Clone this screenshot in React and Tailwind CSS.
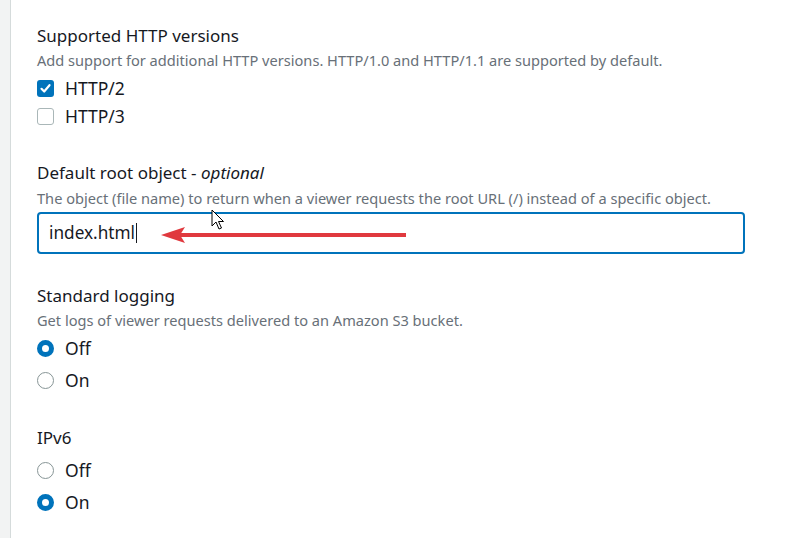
import React from "react";

const font = { fontFamily: '"Noto Sans", "Open Sans", Arial, sans-serif' };

function Checkbox({ checked }) {
  return checked ? (
    <span className="flex h-[17px] w-[17px] shrink-0 items-center justify-center rounded-[3px] bg-[#0073bb]">
      <svg width="13" height="13" viewBox="0 0 13 13">
        <path d="M2.5 6.8 L5.2 9.5 L10.5 3.2" fill="none" stroke="#fff" strokeWidth="2.2" strokeLinecap="round" strokeLinejoin="round" />
      </svg>
    </span>
  ) : (
    <span className="block h-[17px] w-[17px] shrink-0 rounded-[3px] border-[1.5px] border-[#aab7b8] bg-white" />
  );
}

function Radio({ checked }) {
  return checked ? (
    <span className="block h-[17px] w-[17px] shrink-0 rounded-full border-[5px] border-[#0073bb] bg-white" />
  ) : (
    <span className="block h-[17px] w-[17px] shrink-0 rounded-full border-[1.5px] border-[#879596] bg-white" />
  );
}

function Row({ control, label, h }) {
  return (
    <div className={`flex items-center gap-[11px] ${h}`}>
      {control}
      <span className="text-[17.5px] font-normal text-[#16191f]">{label}</span>
    </div>
  );
}

function Heading({ children, className = "" }) {
  return <div className={`h-[24px] text-[17px] leading-[24px] text-[#16191f] ${className}`}>{children}</div>;
}

function Desc({ children, className = "" }) {
  return <div className={`h-[24px] whitespace-nowrap text-[14.6px] leading-[24px] text-[#687078] ${className}`}>{children}</div>;
}

export default function App() {
  return (
    <div className="flex h-[538px] w-[788px] overflow-hidden bg-white" style={font}>
      <div className="w-[10px] shrink-0 bg-[#f2f3f3]" />
      <div className="w-[1px] shrink-0 bg-[#d5dbdb]" />
      <div className="flex flex-1 flex-col pl-[26px] pr-[44px] pt-[24px]">
        <Heading>Supported HTTP versions</Heading>
        <Desc>Add support for additional HTTP versions. HTTP/1.0 and HTTP/1.1 are supported by default.</Desc>
        <div className="mt-[2px] flex flex-col">
          <Row control={<Checkbox checked />} label="HTTP/2" h="h-[28px]" />
          <Row control={<Checkbox />} label="HTTP/3" h="h-[28px]" />
        </div>

        <Heading className="mt-[31px]">
          Default root object - <span className="italic">optional</span>
        </Heading>
        <Desc className="mt-[1px]">
          The object (file name) to return when a viewer requests the root URL (/) instead of a specific object.
        </Desc>
        <div className="relative mt-[2px] flex h-[42px] w-[708px] items-center rounded-[4px] border-2 border-[#0073bb] pl-[10px]">
          <span className="text-[17.2px] text-[#16191f]">index.html</span>
          <span className="ml-[1px] h-[20px] w-[1px] bg-[#16191f]" />
          <svg className="absolute left-[120px] top-[11px]" width="260" height="20" viewBox="0 0 260 20">
            <line x1="18" y1="10" x2="247" y2="10" stroke="#e0393e" strokeWidth="4" />
            <path d="M2 10 L26 2 L21 10 L26 18 Z" fill="#e0393e" />
          </svg>
          <svg className="absolute left-[172px] top-[-5px]" width="14" height="22" viewBox="0 0 14 22">
            <path d="M1 1 L1 17 L5 13 L8 20 L10.5 19 L7.5 12.5 L12.5 12.5 Z" fill="#fff" stroke="#000" strokeWidth="1" strokeLinejoin="round" />
          </svg>
        </div>

        <Heading className="mt-[30px]">Standard logging</Heading>
        <Desc>Get logs of viewer requests delivered to an Amazon S3 bucket.</Desc>
        <div className="flex flex-col">
          <Row control={<Radio checked />} label="Off" h="h-[32px]" />
          <Row control={<Radio />} label="On" h="h-[33px]" />
        </div>

        <Heading className="mt-[29px]">IPv6</Heading>
        <div className="mt-[4px] flex flex-col">
          <Row control={<Radio />} label="Off" h="h-[32px]" />
          <Row control={<Radio checked />} label="On" h="h-[33px]" />
        </div>
      </div>
    </div>
  );
}
